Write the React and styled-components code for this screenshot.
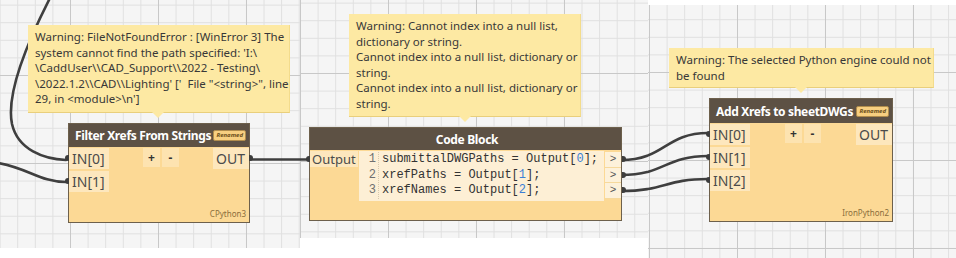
import React from 'react';
import styled, { createGlobalStyle } from 'styled-components';

const GlobalStyle = createGlobalStyle`
  html, body {
    margin: 0;
    padding: 0;
    background: #ffffff;
  }
  body {
    font-family: "Noto Sans", "Open Sans", sans-serif;
  }
`;

const Strip = styled.div`
  display: flex;
  align-items: flex-start;
  width: 956px;
  height: 258px;
  overflow: hidden;
  background: #ffffff;
`;

const Canvas = styled.div`
  position: relative;
  flex: none;
  width: ${(p) => p.$w}px;
  height: ${(p) => p.$h}px;
  margin-top: ${(p) => p.$top || 0}px;
  overflow: hidden;
  background-color: #f5f5f5;
  background-image:
    linear-gradient(to right, #c8c8c8 1px, transparent 1px),
    linear-gradient(to bottom, #c8c8c8 1px, transparent 1px),
    linear-gradient(to right, #e0e0e0 1px, transparent 1px),
    linear-gradient(to bottom, #e0e0e0 1px, transparent 1px);
  background-size: 88px 88px, 88px 88px, 17.6px 17.6px, 17.6px 17.6px;
  background-position: ${(p) => `${p.$gx}px ${p.$gy}px`};
`;

const WireLayer = styled.svg`
  position: absolute;
  left: 0;
  top: 0;
  width: 100%;
  height: 100%;
`;

const Tip = styled.div`
  position: absolute;
  left: ${(p) => p.$x}px;
  top: ${(p) => p.$y}px;
  width: ${(p) => p.$w}px;
  height: ${(p) => p.$h}px;
  box-sizing: border-box;
  padding: 4px 7px;
  background: #fde9a3;
  border-right: 1px solid #f3dc8c;
  border-bottom: 1px solid #e9cf7c;
  color: #383838;
  font-size: 11.5px;
  line-height: 15.6px;
  white-space: pre;
  z-index: 2;

  &::after {
    content: '';
    position: absolute;
    left: ${(p) => p.$px - 6}px;
    bottom: -6px;
    border-left: 6px solid transparent;
    border-right: 6px solid transparent;
    border-top: 6px solid #fde9a3;
  }
`;

const NodeBox = styled.div`
  position: absolute;
  left: ${(p) => p.$x}px;
  top: ${(p) => p.$y}px;
  width: ${(p) => p.$w}px;
  height: ${(p) => p.$h}px;
  box-sizing: border-box;
  display: flex;
  flex-direction: column;
  background: #fcd995;
  border: 1px solid #6d604c;
  z-index: 1;
`;

const Header = styled.div`
  flex: none;
  height: ${(p) => p.$h}px;
  display: flex;
  align-items: center;
  justify-content: ${(p) => (p.$center ? 'center' : 'space-between')};
  padding: 0 3px 0 6px;
  background: #5d5144;
  color: #ffffff;
  font-size: 12px;
  font-weight: 700;
  letter-spacing: -0.35px;
  white-space: nowrap;
`;

const Badge = styled.span`
  display: inline-block;
  height: 9px;
  padding: 0 2px;
  border: 1px solid #b08c4c;
  border-radius: 2px;
  background: #f7cf80;
  color: #6a4d18;
  font-size: 6px;
  font-style: italic;
  font-weight: 700;
  letter-spacing: 0;
  line-height: 9px;
`;

const Body = styled.div`
  flex: 1;
  display: flex;
  flex-direction: column;
  padding-top: 1px;
`;

const PortsRow = styled.div`
  display: flex;
  align-items: flex-start;
`;

const PortCol = styled.div`
  display: flex;
  flex-direction: column;
  gap: 2px;
`;

const Port = styled.div`
  position: relative;
  height: 21px;
  padding: 0 4px 0 3px;
  background: #fde7bd;
  color: #4b4b4b;
  font-size: 14px;
  line-height: 21px;
  text-align: ${(p) => (p.$out ? 'right' : 'left')};

  &::before {
    content: '';
    display: ${(p) => (p.$wired ? 'block' : 'none')};
    position: absolute;
    top: 7px;
    ${(p) => (p.$out ? 'right: -4px;' : 'left: -4px;')}
    width: 4px;
    height: 6px;
    border-radius: ${(p) => (p.$out ? '0 3px 3px 0' : '3px 0 0 3px')};
    background: #3d3d3d;
  }
`;

const Middle = styled.div`
  flex: 1;
  display: flex;
  justify-content: center;
  gap: 2px;
`;

const PlusMinus = styled.div`
  width: 17px;
  height: 19px;
  background: #fde3b0;
  color: #333333;
  font-size: 12px;
  font-weight: 700;
  line-height: 19px;
  text-align: center;
`;

const Engine = styled.div`
  margin-top: auto;
  align-self: flex-end;
  padding: 0 3px 3px 0;
  color: #8b6f3c;
  font-size: 8px;
`;

const CodeRow = styled.div`
  display: flex;
  align-items: flex-start;
`;

const CodeInput = styled(Port)`
  width: 48px;
  height: 16px;
  box-sizing: border-box;
  padding: 0 0 0 2px;
  font-size: 13px;
  line-height: 16px;
  &::before {
    top: 5px;
  }
`;

const CodeArea = styled.div`
  flex: 1;
  display: grid;
  grid-template-columns: 20px 1fr;
  margin-left: 1px;
  padding: 1px 0 2px;
  background: #fdefd5;
  font-family: "Liberation Mono", "DejaVu Sans Mono", monospace;
  font-size: 12px;
  line-height: 15.5px;
  color: #333333;
`;

const Gutter = styled.div`
  padding-right: 2px;
  border-right: 1px dotted #d7c9ae;
  color: #6f6f6f;
  text-align: right;
`;

const CodeText = styled.div`
  padding-left: 3px;
  white-space: pre;
`;

const Num = styled.span`
  color: #3b7fd6;
`;

const OutArrows = styled.div`
  display: flex;
  flex-direction: column;
  width: 16px;
  margin-left: 1px;
  padding-top: 1px;
`;

const Arrow = styled.div`
  position: relative;
  height: 15.5px;
  background: #fdf1da;
  border-bottom: 1px solid #f6d99d;
  box-sizing: border-box;
  color: #555555;
  font-family: "Liberation Mono", monospace;
  font-size: 11px;
  line-height: 15px;
  text-align: center;

  &::after {
    content: '';
    position: absolute;
    top: 4px;
    right: -5px;
    width: 4px;
    height: 6px;
    border-radius: 0 3px 3px 0;
    background: #3d3d3d;
  }
`;

const WIRES = [
  'M 50 -2 C 26 45, 6 95, 12 124 C 18 150, 44 159, 66 160',
  'M -2 163 C 28 168, 40 182, 66 182',
  'M 250 159.5 L 308 159.5',
  'M 621 160 C 665 160, 665 133, 708 133',
  'M 621 175 C 665 175, 665 156, 708 156',
  'M 621 191 C 665 191, 665 179, 708 179',
];

function Wires({ x, y, w, h }) {
  return (
    <WireLayer viewBox={`${x} ${y} ${w} ${h}`}>
      {WIRES.map((d) => (
        <path key={d} d={d} fill="none" stroke="#3f3f3f" strokeWidth="2.6" strokeLinecap="round" />
      ))}
    </WireLayer>
  );
}

const tip1 = [
  'Warning: FileNotFoundError : [WinError 3] The',
  "system cannot find the path specified: 'I:\\",
  '\\CaddUser\\\\CAD_Support\\\\2022 - Testing\\',
  "\\2022.1.2\\\\CAD\\\\Lighting' ['  File \"<string>\", line",
  "29, in <module>\\n']",
].join('\n');

const tip2 = [
  'Warning: Cannot index into a null list,',
  'dictionary or string.',
  'Cannot index into a null list, dictionary or',
  'string.',
  'Cannot index into a null list, dictionary or',
  'string.',
].join('\n');

const tip3 = ['Warning: The selected Python engine could not', 'be found'].join('\n');

const PythonNode = ({ x, y, w, h, title, inputs, engine, outWired, headerH }) => (
  <NodeBox $x={x} $y={y} $w={w} $h={h}>
    <Header $h={headerH}>
      <span>{title}</span>
      <Badge>Renamed</Badge>
    </Header>
    <Body>
      <PortsRow>
        <PortCol>
          {inputs.map((name) => (
            <Port key={name} $wired>{name}</Port>
          ))}
        </PortCol>
        <Middle>
          <PlusMinus>+</PlusMinus>
          <PlusMinus>-</PlusMinus>
        </Middle>
        <PortCol>
          <Port $out $wired={outWired}>OUT</Port>
        </PortCol>
      </PortsRow>
      <Engine>{engine}</Engine>
    </Body>
  </NodeBox>
);

const codeLines = [
  ['submittalDWGPaths = Output[', '0', '];'],
  ['xrefPaths = Output[', '1', '];'],
  ['xrefNames = Output[', '2', '];'],
];

const CodeBlockNode = () => (
  <NodeBox $x={309} $y={127} $w={313} $h={94}>
    <Header $h={22} $center>Code Block</Header>
    <Body>
      <CodeRow>
        <CodeInput $wired>Output</CodeInput>
        <CodeArea>
          <Gutter>
            {codeLines.map((_, i) => (
              <div key={i}>{i + 1}</div>
            ))}
          </Gutter>
          <CodeText>
            {codeLines.map(([a, n, b]) => (
              <div key={a}>
                {a}
                <Num>{n}</Num>
                {b}
              </div>
            ))}
          </CodeText>
        </CodeArea>
        <OutArrows>
          {codeLines.map(([a]) => (
            <Arrow key={a}>&gt;</Arrow>
          ))}
        </OutArrows>
      </CodeRow>
    </Body>
  </NodeBox>
);

export default function App() {
  return (
    <>
      <GlobalStyle />
      <Strip>
        <Canvas $w={300} $h={248} $gx={70} $gy={75}>
          <Wires x={0} y={0} w={300} h={248} />
          <Tip $x={28} $y={25} $w={262} $h={88} $px={130}>{tip1}</Tip>
          <PythonNode
            x={68}
            y={123}
            w={182}
            h={100}
            headerH={23}
            title="Filter Xrefs From Strings"
            inputs={['IN[0]', 'IN[1]']}
            engine="CPython3"
            outWired
          />
        </Canvas>
        <Canvas $w={348} $h={238} $gx={0} $gy={73}>
          <Wires x={300} y={0} w={348} h={238} />
          <Tip $x={49} $y={14} $w={232} $h={103} $px={116}>{tip2}</Tip>
          <div style={{ position: 'absolute', left: -300, top: 0 }}>
            <CodeBlockNode />
          </div>
        </Canvas>
        <Canvas $w={308} $h={253} $top={5} $gx={1} $gy={67}>
          <Wires x={648} y={5} w={308} h={253} />
          <Tip $x={21} $y={43} $w={265} $h={40} $px={132}>{tip3}</Tip>
          <div style={{ position: 'absolute', left: -648, top: -5 }}>
            <PythonNode
              x={709}
              y={98}
              w={184}
              h={124}
              headerH={24}
              title="Add Xrefs to sheetDWGs"
              inputs={['IN[0]', 'IN[1]', 'IN[2]']}
              engine="IronPython2"
            />
          </div>
        </Canvas>
      </Strip>
    </>
  );
}
